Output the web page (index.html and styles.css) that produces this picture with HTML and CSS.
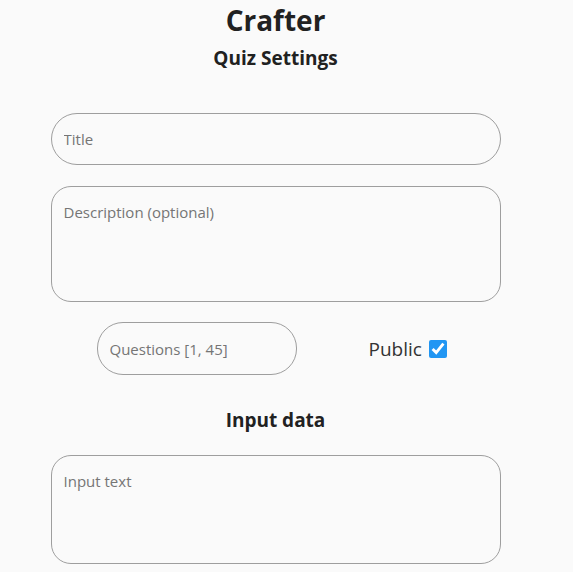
FILE: index.html
```html
<!DOCTYPE html>
<html lang="en">
<head>
<meta charset="utf-8">
<title>Crafter</title>
<link rel="stylesheet" href="styles.css">
</head>
<body>
<main class="page">
  <h1 class="brand">Crafter</h1>
  <h2 class="section-title section-quiz">Quiz Settings</h2>
  <form class="form">
    <input class="field field-pill" type="text" placeholder="Title">
    <textarea class="field field-area field-desc" placeholder="Description (optional)"></textarea>
    <div class="row">
      <input class="field field-pill field-questions" type="text" placeholder="Questions [1, 45]">
      <label class="public">Public <input class="check" type="checkbox" checked></label>
    </div>
    <h2 class="section-title section-input">Input data</h2>
    <textarea class="field field-area field-input" placeholder="Input text"></textarea>
  </form>
</main>
</body>
</html>
```

FILE: styles.css
```css
html, body {
  margin: 0;
  padding: 0;
  background: #fafafa;
  font-family: "Open Sans", "Noto Sans", sans-serif;
  color: #212121;
  overflow: hidden;
}

.page {
  width: 551px;
  display: flex;
  flex-direction: column;
  align-items: center;
}

.brand {
  margin: 0;
  font-size: 28px;
  line-height: 40px;
  font-weight: 700;
}

.section-title {
  margin: 0;
  font-size: 19px;
  line-height: 26px;
  font-weight: 700;
}

.section-quiz {
  margin-top: 5px;
}

.form {
  width: 450px;
  margin-top: 42px;
  display: flex;
  flex-direction: column;
}

.field {
  box-sizing: border-box;
  width: 100%;
  border: 1px solid #9e9e9e;
  background: #fafafa;
  font-family: inherit;
  font-size: 15px;
  color: #212121;
  padding: 0 12px;
  outline: none;
  margin: 0;
}

.field::placeholder {
  color: #757575;
}

.field-pill {
  height: 52px;
  border-radius: 26px;
}

.field-area {
  resize: none;
  border-radius: 20px;
  padding-top: 15px;
  display: block;
}

.field-desc {
  height: 116px;
  margin-top: 21px;
}

.row {
  display: flex;
  align-items: center;
  margin-top: 20px;
  padding-left: 46px;
  gap: 72px;
}

.field-questions {
  width: 200px;
  height: 53px;
}

.public {
  display: flex;
  align-items: center;
  gap: 7px;
  font-size: 19px;
  color: #333333;
}

.check {
  width: 18px;
  height: 18px;
  margin: 0;
  accent-color: #2196f3;
}

.section-input {
  align-self: center;
  margin-top: 32px;
}

.field-input {
  height: 109px;
  margin-top: 22px;
}
```
